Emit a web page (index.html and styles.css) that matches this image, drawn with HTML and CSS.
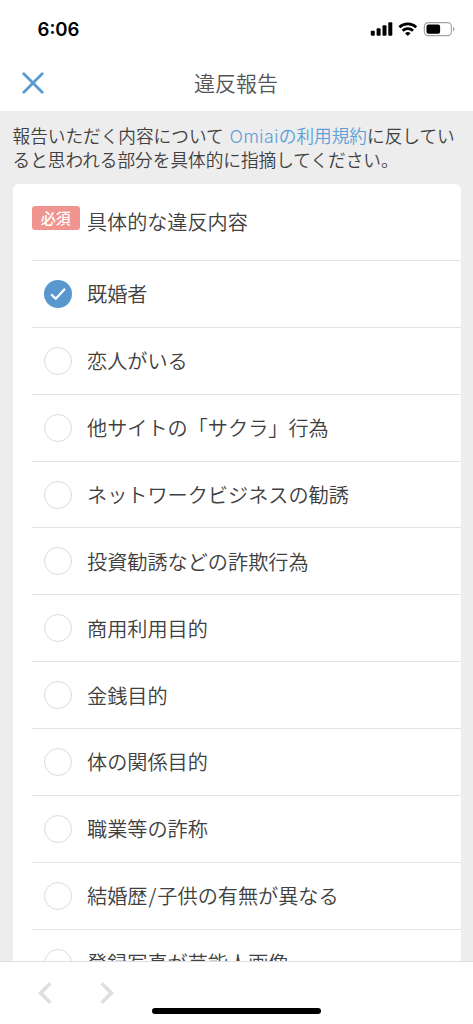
FILE: index.html
```html
<!DOCTYPE html>
<html lang="ja">
<head>
<meta charset="utf-8">
<meta name="viewport" content="width=device-width, initial-scale=1">
<title>違反報告</title>
<link rel="stylesheet" href="styles.css">
</head>
<body>
<div class="screen">
  <div class="status">
    <span class="time">6:06</span>
    <svg class="status-icons" width="86" height="18" viewBox="0 0 86 18">
      <rect x="0.8" y="10.8" width="4" height="5" rx="1"/>
      <rect x="6.6" y="8.2" width="4" height="7.6" rx="1"/>
      <rect x="12.5" y="5.2" width="4" height="10.6" rx="1"/>
      <rect x="18.3" y="2.2" width="4" height="13.6" rx="1"/>
      <g fill="none" stroke="#000" stroke-width="2.7">
        <path d="M29.4 7.2a12.1 12.1 0 0 1 16.8 0"/>
        <path d="M32.6 10.8a7.5 7.5 0 0 1 10.4 0"/>
      </g>
      <path d="M35 13.3a4 4 0 0 1 5.6 0L37.8 15.9z"/>
      <rect x="54.4" y="2.6" width="27" height="13" rx="3.8" fill="none" stroke="#a5a5a5" stroke-width="1.2"/>
      <rect x="56.5" y="4.6" width="13.6" height="9.2" rx="2"/>
      <path d="M83 6.7a2.6 2.6 0 0 1 0 4.8z" fill="#a5a5a5"/>
    </svg>
  </div>
  <header class="nav">
    <svg class="close" width="22" height="22" viewBox="0 0 22 22"><path d="M1.8 1.8L20.2 20.2M20.2 1.8L1.8 20.2"/></svg>
    <h1 class="title">違反報告</h1>
  </header>
  <main class="content">
    <p class="intro">報告いただく内容について <a class="link"><span class="brand">Omiai</span>の利用規約</a>に反していると思われる部分を具体的に指摘してください。</p>
    <section class="card">
      <div class="card-head"><span class="badge">必須</span><h2 class="question">具体的な違反内容</h2></div>
      <ul class="options">
        <li class="option"><span class="radio checked"><svg width="28" height="28" viewBox="0 0 28 28"><path d="M7.2 14.4L11.8 18.8L21 8.8"/></svg></span><span class="label">既婚者</span></li>
        <li class="option"><span class="radio"></span><span class="label">恋人がいる</span></li>
        <li class="option"><span class="radio"></span><span class="label">他サイトの「サクラ」行為</span></li>
        <li class="option"><span class="radio"></span><span class="label">ネットワークビジネスの勧誘</span></li>
        <li class="option"><span class="radio"></span><span class="label">投資勧誘などの詐欺行為</span></li>
        <li class="option"><span class="radio"></span><span class="label">商用利用目的</span></li>
        <li class="option"><span class="radio"></span><span class="label">金銭目的</span></li>
        <li class="option"><span class="radio"></span><span class="label">体の関係目的</span></li>
        <li class="option"><span class="radio"></span><span class="label">職業等の詐称</span></li>
        <li class="option"><span class="radio"></span><span class="label">結婚歴<span class="slash">/</span>子供の有無が異なる</span></li>
        <li class="option"><span class="radio"></span><span class="label">登録写真が芸能人画像</span></li>
      </ul>
    </section>
  </main>
  <footer class="toolbar">
    <div class="arrows">
      <svg width="14" height="22" viewBox="0 0 14 22"><path d="M12.3 1.3L2.6 11L12.3 20.7"/></svg>
      <svg width="14" height="22" viewBox="0 0 14 22"><path d="M1.7 1.3L11.4 11L1.7 20.7"/></svg>
    </div>
    <div class="home"></div>
  </footer>
</div>
</body>
</html>
```
FILE: styles.css
```css
* { box-sizing: border-box; }
body {
  margin: 0;
  background: #fff;
  color: #404040;
  font-family: "Noto Sans CJK JP", sans-serif;
  font-weight: 350;
}
.screen {
  display: flex;
  flex-direction: column;
  height: 1024px;
  overflow: hidden;
}
.status {
  display: flex;
  justify-content: space-between;
  align-items: center;
  flex: none;
  height: 58px;
  padding: 0 17px 0 37.5px;
}
.time {
  padding-bottom: 1px;
  font: 600 18.6px/24px Inter, sans-serif;
  color: #000;
}
.nav {
  display: grid;
  grid-template-columns: 22px 1fr 22px;
  align-items: center;
  flex: none;
  height: 53px;
  padding: 0 22px 3px;
}
.close { fill: none; stroke: #5a9bd1; stroke-width: 2.8; stroke-linecap: round; }
.title {
  margin: 0 1px 0 0;
  padding-bottom: 2px;
  text-align: center;
  font-size: 21px;
  font-weight: 350;
  line-height: 30px;
  color: #555;
}
.content {
  flex: 1;
  min-height: 0;
  overflow: hidden;
  padding: 13px 12.5px 0;
  background: #ededed;
}
.intro {
  margin: 0 0 12px;
  font-size: 17.65px;
  line-height: 24px;
  word-break: break-all;
}
.link { color: #5b9fd8; }
.brand {
  padding-left: 2px;
  font-family: Inter, sans-serif;
  font-weight: 300;
  line-height: 1;
  letter-spacing: 0.5px;
}
.card {
  padding-left: 19px;
  background: #fff;
  border-radius: 6px;
}
.card-head {
  display: flex;
  align-items: flex-start;
  height: 76px;
  padding-top: 22px;
}
.badge {
  width: 48.5px;
  height: 24px;
  margin-right: 7px;
  border-radius: 3px;
  background: #f09490;
  color: #fff;
  font-size: 15px;
  font-weight: 500;
  line-height: 23px;
  text-align: center;
}
.question {
  margin: 0;
  font-size: 20.1px;
  font-weight: 350;
  line-height: 32px;
}
.options { margin: 0; padding: 0; list-style: none; }
.option {
  display: flex;
  align-items: center;
  gap: 15.5px;
  height: 66.86px;
  padding-left: 12px;
  border-top: 1px solid #e2e2e2;
  font-size: 20.15px;
  line-height: 30px;
}
.label { padding-top: 1px; }
.slash { padding: 0 1px; }
.radio {
  width: 28px;
  height: 28px;
  border: 1px solid #dcdcdc;
  border-radius: 50%;
}
.checked { border: 0; background: #5998ce; }
.checked svg { display: block; fill: none; stroke: #fff; stroke-width: 2.2; }
.toolbar {
  flex: none;
  height: 63px;
  padding-top: 20px;
  border-top: 1px solid #dedede;
  background: #fff;
}
.arrows {
  display: flex;
  gap: 48.5px;
  padding-left: 37.5px;
}
.arrows svg { display: block; fill: none; stroke: #dfdfdf; stroke-width: 3.6; }
.home {
  width: 169px;
  height: 6.5px;
  margin: 3.5px auto 0;
  border-radius: 3.25px;
  background: #000;
}
```
